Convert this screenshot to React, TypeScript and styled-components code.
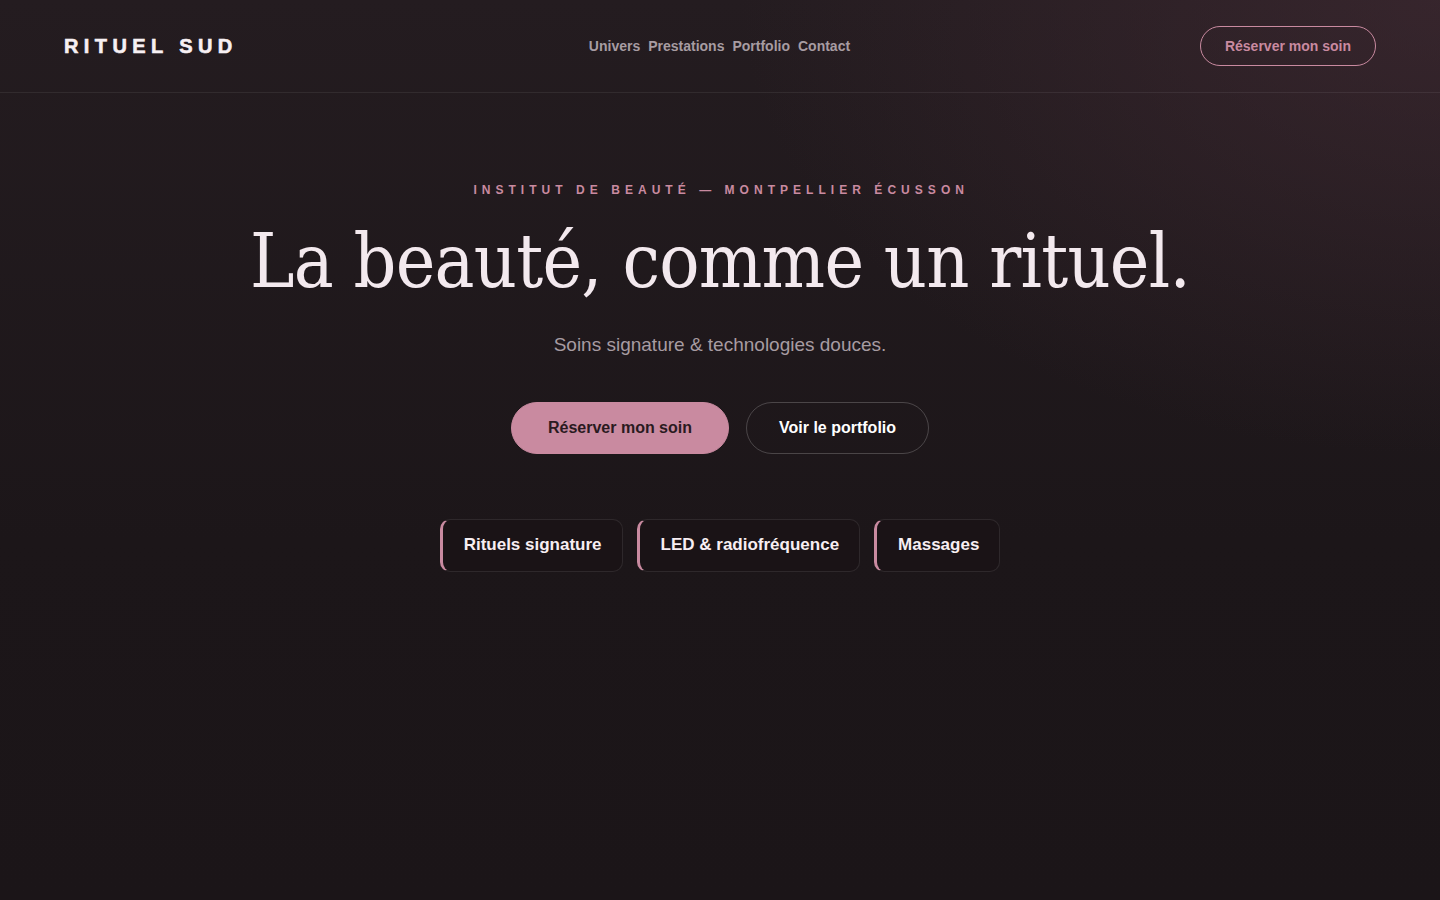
import React from "react";
import styled, { createGlobalStyle } from "styled-components";

const Global = createGlobalStyle`
  html, body { margin: 0; padding: 0; }
  body {
    background: #1b1518;
    font-family: "Liberation Sans", Arial, sans-serif;
    color: #f4ecef;
  }
  * { box-sizing: border-box; }
`;

const Page = styled.div`
  min-height: 900px;
  background:
    radial-gradient(ellipse 1000px 650px at 100% 0%, rgba(70, 45, 55, 0.55), transparent 70%),
    linear-gradient(180deg, #241c20 0%, #1c1619 60%, #1b1518 100%);
`;

const Header = styled.header`
  height: 93px;
  display: flex;
  align-items: center;
  justify-content: space-between;
  padding: 0 64px;
  border-bottom: 1px solid rgba(255, 255, 255, 0.07);
`;

const Logo = styled.div`
  font-size: 20px;
  font-weight: 700;
  letter-spacing: 0.27em;
  color: #f7f0f3;
  -webkit-text-stroke: 0.6px #f7f0f3;
  width: 240px;
`;

const Nav = styled.nav`
  display: flex;
  gap: 8px;
`;

const NavLink = styled.a`
  font-size: 14px;
  font-weight: 700;
  color: #a79ca2;
  text-decoration: none;
`;

const HeaderCta = styled.a`
  height: 40px;
  padding: 0 24px;
  display: inline-flex;
  align-items: center;
  border: 1px solid #c98aa0;
  border-radius: 999px;
  color: #c98aa0;
  font-size: 14px;
  font-weight: 700;
  text-decoration: none;
  margin-left: 65px;
`;

const Hero = styled.main`
  display: flex;
  flex-direction: column;
  align-items: center;
  padding-top: 90px;
`;

const Eyebrow = styled.div`
  font-size: 12px;
  font-weight: 700;
  letter-spacing: 0.42em;
  color: #c98aa0;
  margin-left: 0.2em;
`;

const Title = styled.h1`
  margin: 24px 0 0;
  font-family: "DejaVu Serif", Georgia, serif;
  font-stretch: condensed;
  font-weight: 400;
  font-size: 74.5px;
  line-height: 1.1;
  letter-spacing: -0.01em;
  color: #f3e9ee;
`;

const Subtitle = styled.p`
  margin: 31px 0 0;
  font-size: 19px;
  color: #a79ca2;
`;

const Actions = styled.div`
  display: flex;
  gap: 17px;
  margin-top: 46px;
`;

const Button = styled.a<{ $primary?: boolean }>`
  height: 52px;
  padding: 0 ${(p) => (p.$primary ? 36 : 32)}px;
  display: inline-flex;
  align-items: center;
  border-radius: 999px;
  font-size: 16px;
  font-weight: 700;
  text-decoration: none;
  background: ${(p) => (p.$primary ? "#c98aa0" : "transparent")};
  color: ${(p) => (p.$primary ? "#2a1a20" : "#ffffff")};
  border: 1px solid ${(p) => (p.$primary ? "#c98aa0" : "rgba(255,255,255,0.2)")};
`;

const Tags = styled.div`
  display: flex;
  gap: 14px;
  margin-top: 65px;
`;

const Tag = styled.div`
  height: 53px;
  padding: 0 20px 0 21px;
  display: inline-flex;
  align-items: center;
  border: 1px solid rgba(255, 255, 255, 0.09);
  border-left: 3px solid #c98aa0;
  border-radius: 10px;
  background: #1a1316;
  font-size: 17px;
  font-weight: 700;
  color: #f7eef2;
`;

export default function App() {
  return (
    <>
      <Global />
      <Page>
        <Header>
          <Logo>RITUEL SUD</Logo>
          <Nav>
            <NavLink href="#">Univers</NavLink>
            <NavLink href="#">Prestations</NavLink>
            <NavLink href="#">Portfolio</NavLink>
            <NavLink href="#">Contact</NavLink>
          </Nav>
          <HeaderCta href="#">Réserver mon soin</HeaderCta>
        </Header>
        <Hero>
          <Eyebrow>INSTITUT DE BEAUTÉ — MONTPELLIER ÉCUSSON</Eyebrow>
          <Title>La beauté, comme un rituel.</Title>
          <Subtitle>Soins signature &amp; technologies douces.</Subtitle>
          <Actions>
            <Button $primary href="#">Réserver mon soin</Button>
            <Button href="#">Voir le portfolio</Button>
          </Actions>
          <Tags>
            <Tag>Rituels signature</Tag>
            <Tag>LED &amp; radiofréquence</Tag>
            <Tag>Massages</Tag>
          </Tags>
        </Hero>
      </Page>
    </>
  );
}
